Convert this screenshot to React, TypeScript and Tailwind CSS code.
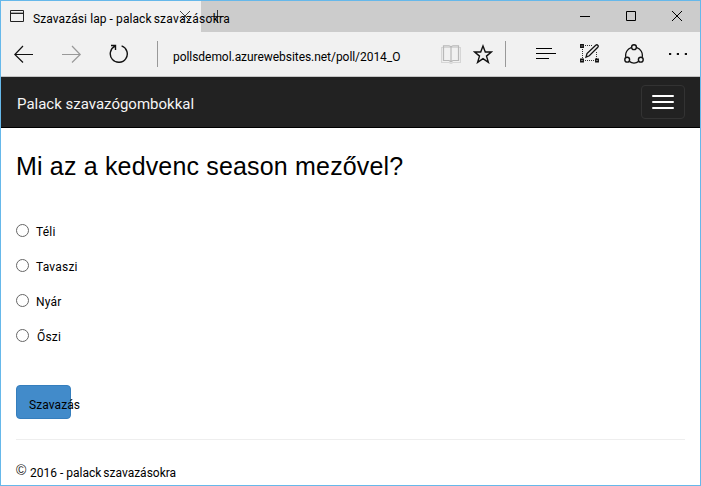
import type { ReactNode } from "react";

const small = "font-['Roboto','Liberation_Sans',sans-serif] text-[12px] leading-[16px] whitespace-pre text-black";

function Icon({ w, h, children, className = "" }: { w: number; h: number; children: ReactNode; className?: string }) {
  return (
    <svg width={w} height={h} viewBox={`0 0 ${w} ${h}`} fill="none" stroke="#111" strokeWidth="1.2" className={`block shrink-0 ${className}`}>
      {children}
    </svg>
  );
}

function TitleBar() {
  return (
    <header className="flex h-[31px] bg-[#cccccc]">
      <div className="relative flex w-[200px] shrink-0 bg-[#f1f1f1]">
        <Icon w={14} h={12} className="mt-[9px] ml-[9px]">
          <path d="M.5 .5h13v11H.5z" stroke="#222" strokeWidth="1" />
          <path d="M1 2.5h12" stroke="#aaa" strokeWidth="1" />
          <path d="M1 3.5h12" stroke="#222" strokeWidth="1" />
        </Icon>
        <Icon w={10} h={10} className="mt-[10px] ml-[156px]">
          <path d="M0 0l10 10M10 0L0 10" stroke="#444" strokeWidth="1" />
        </Icon>
        <span className={`${small} absolute top-[10px] left-[32px] z-10`}>
          <span className="tracking-[0.08px]">Szavazási lap - palack</span>
          <span className="ml-[2px] tracking-[0.3px]">szavazásokra</span>
        </span>
      </div>
      <Icon w={13} h={13} className="mt-[9px] ml-[10px]">
        <path d="M0 6.5h13M6.5 0v13" stroke="#333" strokeWidth="1" />
      </Icon>
      <div className="mt-[10px] mr-[18px] ml-auto flex gap-[36px]">
        <Icon w={10} h={10}><path d="M0 5.5h10" stroke="#000" strokeWidth="1" /></Icon>
        <Icon w={10} h={10}><path d="M.5 .5h9v9h-9z" stroke="#000" strokeWidth="1" /></Icon>
        <Icon w={10} h={10}><path d="M0 0l10 10M10 0L0 10" stroke="#000" strokeWidth="1" /></Icon>
      </div>
    </header>
  );
}

function Toolbar() {
  return (
    <div className="flex h-[45px] items-start border-b border-[#c4c4c4] bg-[#f1f1f1]">
      <Icon w={20} h={18} className="mt-[13px] ml-[13px]">
        <path d="M19 9.5H1M9 1L.8 9.5 9 17.5" />
      </Icon>
      <Icon w={20} h={18} className="mt-[13px] ml-[28px]">
        <path d="M0 9.5h18M10 1l8.2 8.5L10 17.5" stroke="#999" />
      </Icon>
      <Icon w={20} h={20} className="mt-[12px] ml-[27px]">
        <path d="M12.6 1.8A8.5 8.5 0 1 1 6 2.2M2 1.5h4.5V6" strokeWidth="1.4" />
      </Icon>
      <div className="mt-[9px] ml-[28px] h-[26px] w-px bg-[#999]" />
      <span className={`${small} mt-[17px] ml-[15px] w-[228px] tracking-[-0.05px]`}>pollsdemol.azurewebsites.net/poll/2014_O</span>
      <Icon w={20} h={19} className="mt-[13px] ml-[40px]">
        <path d="M.5 2.5h19v15H12l-2 1-2-1H.5z" stroke="#d6d6d6" />
        <path d="M2.5 .8H8l2 1 2-1h5.5v14.7H12l-2 1.2-2-1.2H2.5zM10 2v15" stroke="#b8b8b8" strokeWidth="1.2" />
      </Icon>
      <Icon w={20} h={20} className="mt-[12px] ml-[12px]">
        <path d="M10 2l2.3 6h6l-4.8 4.1 1.9 6.3-5.4-3.8-5.4 3.8 1.9-6.3L1.7 8h6z" strokeWidth="1.4" />
      </Icon>
      <div className="mt-[9px] ml-[12px] h-[26px] w-px bg-[#999]" />
      <Icon w={20} h={14} className="mt-[14px] ml-[30px]">
        <path d="M0 2.5h16M0 7.5h20M0 12.5h13" stroke="#000" strokeWidth="1" />
      </Icon>
      <Icon w={19} h={20} className="mt-[11px] ml-[24px]">
        <path d="M5 2.5h8M2.5 6v10M16.5 9v7M5 17.5h10" strokeDasharray="1 1" strokeWidth="1" stroke="#333" />
        <path d="M.8 1.8h2.4v2.4H.8zM.8 16.3h2.4v2.4H.8zM15.8 16.3h2.4v2.4h-2.4z" strokeWidth="1.5" />
        <path d="M6 14.2l1-3.7 8.7-8.3q1.2-1 2.1 0 .9.9 0 2l-8.5 8.6z" strokeWidth="1.3" />
      </Icon>
      <Icon w={20} h={20} className="mt-[12px] ml-[25px]">
        <path d="M7.2 3.6A8.2 8.2 0 0 0 1.8 13M12.8 3.6a8.2 8.2 0 0 1 5.4 9.4M5.3 17.4a8.2 8.2 0 0 0 9.4 0" strokeWidth="1.3" />
        <circle cx="10" cy="3.2" r="2.4" strokeWidth="1.4" />
        <circle cx="3.2" cy="15.7" r="2.4" strokeWidth="1.4" />
        <circle cx="16.8" cy="15.7" r="2.4" strokeWidth="1.4" />
      </Icon>
      <Icon w={18} h={4} className="mt-[20px] ml-[25px]">
        <path d="M0 2h2.2M7.8 2H10M15.8 2H18" strokeWidth="2" />
      </Icon>
    </div>
  );
}

const options = ["Téli", "Tavaszi", "Nyár", "Őszi"];

export default function App() {
  return (
    <div className="flex h-[486px] w-[701px] flex-col overflow-hidden border border-[#66b8ea] bg-white font-['Liberation_Sans',Arial,sans-serif]">
      <TitleBar />
      <Toolbar />
      <nav className="flex h-[51px] shrink-0 justify-between border-b border-black bg-[#222] pr-[15px] pl-[16px]">
        <span className="mt-[17px] font-['Roboto',sans-serif] text-[15px] leading-[20px] whitespace-pre text-[#f5f5f5]">Palack szavazógombokkal</span>
        <button className="mt-[8px] flex h-[34px] w-[44px] flex-col items-center justify-center gap-[4px] rounded-[4px] border border-[#333]">
          <span className="h-[2px] w-[22px] rounded-[1px] bg-white" />
          <span className="h-[2px] w-[22px] rounded-[1px] bg-white" />
          <span className="h-[2px] w-[22px] rounded-[1px] bg-white" />
        </button>
      </nav>
      <main className="flex flex-col px-[15px]">
        <h1 className="mt-[22px] text-[25px] leading-[32px] tracking-[0.17px] whitespace-pre text-black">Mi az a kedvenc season mezővel?</h1>
        <div className="mt-[42px] flex flex-col gap-[19px]">
          {options.map((o, i) => (
            <label key={o} className="flex h-[16px]">
              <span className="h-[13px] w-[13px] rounded-full border border-[#666] bg-white" />
              <span className={`${small} tracking-[0.2px] ${i === 3 ? "ml-[8px]" : "ml-[7px]"}`}>{o}</span>
            </label>
          ))}
        </div>
        <button className="mt-[40px] flex h-[34px] w-[55px] rounded-[4px] border border-[#357ebd] bg-[#428bca]">
          <span className={`${small} mt-[11px] ml-[12px] tracking-[0.08px]`}>Szavazás</span>
        </button>
        <hr className="mt-[20px] border-[#eee]" />
        <footer className="mt-[23px] flex">
          <span className="-mt-[1px] w-[14px] font-['Liberation_Sans',sans-serif] text-[14px] leading-[16px] text-[#222]">©</span>
          <span className={`${small} mt-[2px]`}>
            <span>2016 - palack</span>
            <span className="ml-[2px]">szavazásokra</span>
          </span>
        </footer>
      </main>
    </div>
  );
}
